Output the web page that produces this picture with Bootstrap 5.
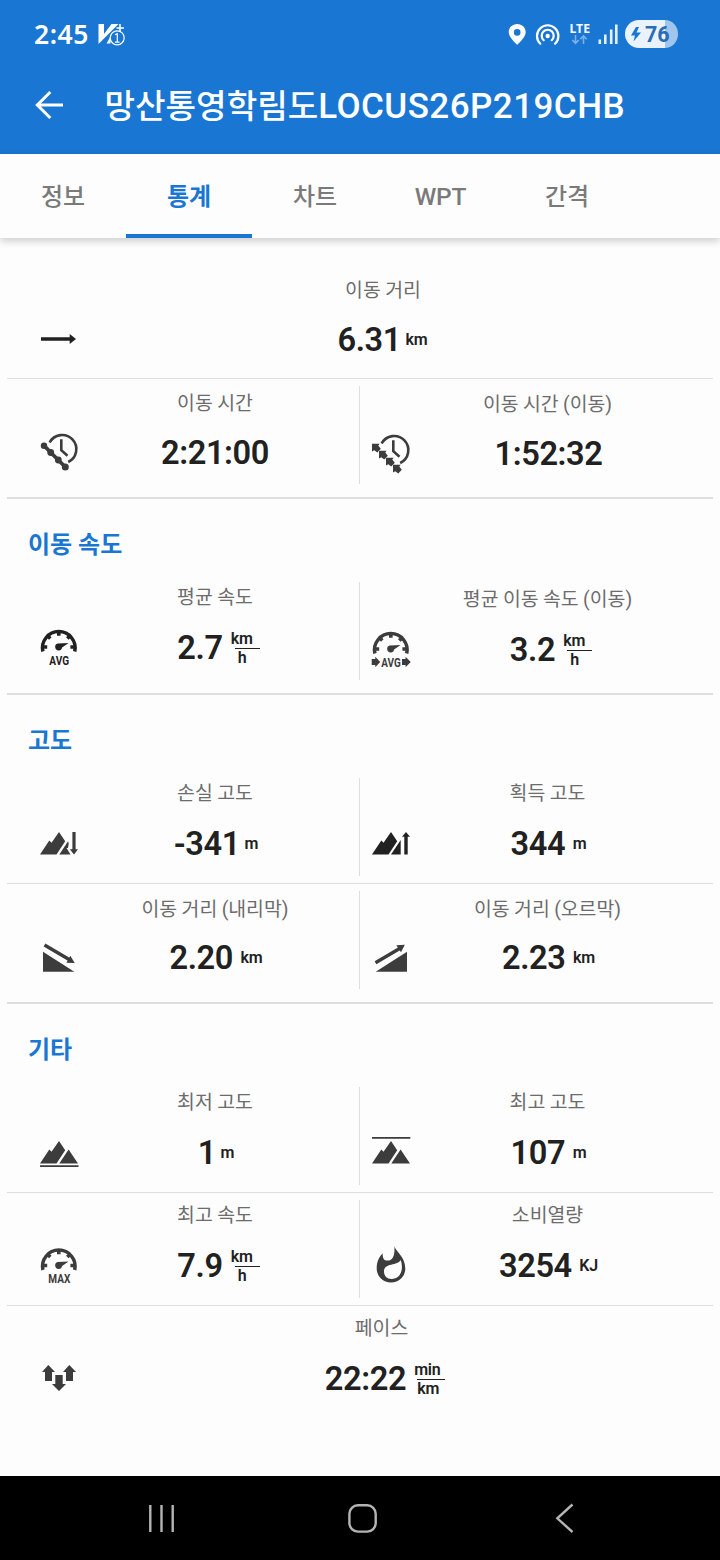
<!DOCTYPE html>
<html lang="ko">
<head>
<meta charset="utf-8">
<meta name="viewport" content="width=device-width, initial-scale=1">
<title>망산통영학림도LOCUS26P219CHB</title>
<link href="https://cdn.jsdelivr.net/npm/bootstrap@5.3.0/dist/css/bootstrap.min.css" rel="stylesheet">
<style>
  :root { --brand:#1976d2; --paper:#fdfdfd; --ink:#212121; --icon:#3c3c3c; --rule:#dedede; }
  body { width:720px; height:1560px; background:var(--paper); color:var(--ink); font-family:Roboto,"Noto Sans CJK KR",sans-serif; overflow:hidden; }
  svg { display:block; flex:none; overflow:visible; }
  .app-head { background:var(--brand); height:154px; color:#fff; }
  .statusbar { height:68px; font-family:"Noto Sans",sans-serif; font-weight:600; padding:0 42px 0 34px; }
  .clock { font-size:26.5px; line-height:68px; letter-spacing:.5px; }
  .titlebar { height:74px; padding-left:34px; }
  .track-title { font-size:33.2px; font-weight:500; line-height:74px; white-space:nowrap; padding:3px 0 0 40.500px; }
  .track-title .code { font-size:35px; letter-spacing:.45px; }
  .tabs { height:84px; background:var(--paper); box-shadow:0 3px 8px rgba(0,0,0,.2); position:relative; }
  .tabs .nav-link { width:126px; height:84px; padding:0; line-height:87px; font-size:24px; font-weight:500; color:#7a7a7a; border-bottom:4px solid transparent; border-radius:0; }
  .tabs .nav-link.active { color:var(--brand); border-bottom-color:var(--brand); font-weight:700; }
  .tabs .latin { font-size:24.5px; letter-spacing:-.2px; line-height:86px; padding-right:1px; }
  .stats { height:1238px; padding:28px 7px 0; }
  .group { border-bottom:2px solid var(--rule); padding-bottom:6px; }
  .group:last-child { border:0; }
  .group-title { height:76px; margin:0; padding:8px 0 0 21px; line-height:76px; font-size:24px; font-weight:700; color:var(--brand); }
  .stat-row { padding:7px 21px; height:112px; }
  .stat-row + .stat-row { border-top:1px solid var(--rule); height:113px; }
  .cell { width:331px; height:98px; }
  .cell.whole { width:664px; }
  .cell + .cell { width:333px; border-left:1px solid var(--rule); }
  .low1 { padding-top:1px; } .low2 { padding-top:2px; }
  .glyph { width:40px; height:40px; margin:46px -9px 0 11px; fill:var(--icon); color:var(--icon); }
  .glyph.dark { fill:var(--ink); color:var(--ink); }
  .glyph text { font:700 12px Roboto,sans-serif; }
  .caption-ko { font-size:19.4px; line-height:30px; padding:2px 0 0 1px; height:30px; font-weight:400; color:#6c6c6c; white-space:nowrap; word-spacing:-.4px; }
  .group:first-child .caption-ko, .low1 .caption-ko { padding-top:2.500px; }
  .group:not(:first-child) .cell:not(.low1) .caption-ko { padding-top:1.400px; }
  .value { height:40px; margin-top:16px; padding-left:3px; font-size:32.600px; font-weight:600; line-height:40px; letter-spacing:-.4px; }
  .value.plain { padding-left:1px; }
  .value.of { padding-left:8px; }
  .group:first-child .value { margin-top:16.500px; }
  .unit { font-size:16px; font-weight:600; margin-left:7.500px; letter-spacing:-.2px; }
  .unit.near { margin-left:4.500px; }
  .frac { font-size:16px; line-height:18px; font-weight:600; margin-left:8px; margin-top:-1px; text-align:left; letter-spacing:-.2px; }
  .frac .under { display:block; margin-left:4px; border-top:1px solid currentColor; width:25px; padding-left:3px; line-height:17px; }
  .frac.wide .under { width:28px; padding-left:0; margin-left:3px; }
  .navbar-sys { height:84px; background:#000; }
</style>
</head>
<body>
<header class="app-head">
  <div class="statusbar d-flex align-items-center">
    <span class="clock">2:45</span>
    <svg width="30" height="26" viewBox="89.500 21 30 26" fill="none" stroke="#fff">
      <path d="M99 24h5.500v10l7.500-10h7l-20 20z" fill="#fff" stroke="none"/>
      <path d="M107 43.500l4-7v7z" fill="#fff" stroke="none"/>
      <path d="M120.500 24v8M117 28h7.500" stroke-width="1.500"/>
      <circle cx="117.700" cy="37.800" r="7" fill="#1976d2" stroke-width="1.200"/>
      <path d="M115.500 34.700l2.300-1v8.500M115.500 42.200h4.500" stroke-width="1.200"/>
    </svg>
    <svg class="ms-auto" width="172" height="32" viewBox="506 17 172 32" fill="none" stroke="#fff">
      <path fill="#fff" stroke="none" fill-rule="evenodd" d="M517.200 23c-4.800 0-8.500 3.600-8.500 8.200 0 5.300 8.500 12.500 8.500 12.500s8.500-7.200 8.500-12.500c0-4.600-3.700-8.200-8.500-8.200zm0 5.100a3.300 3.300 0 1 1 0 6.600 3.300 3.300 0 0 1 0-6.600z"/>
      <g stroke-width="2.200" stroke-linecap="round">
        <path d="M540.300 42.700a10.700 10.700 0 1 1 14.800 0M543.700 39.200a6 6 0 1 1 8 0"/>
        <circle cx="547.700" cy="35" r="2.200" fill="#fff" stroke="none"/>
      </g>
      <text x="569.500" y="31.800" fill="#fff" stroke="none" font-size="13" font-weight="700" textLength="20.500" lengthAdjust="spacingAndGlyphs">LTE</text>
      <path stroke="#7db1e6" stroke-width="1.600" d="M575.500 34v8M572.300 39l3.200 3.400 3.200-3.400M583.500 43v-8M580.300 38.200l3.200-3.400 3.200 3.400"/>
      <path stroke-width="2.600" d="M599.800 38.500v4.500M605.300 33.500v9.500M611.200 28.500v14.500M616.300 23.500v19.500" stroke="#e4effa"/>
      <path fill="#eaf3fc" stroke="none" d="M665 19h-26a14 14 0 0 0 0 28h26z"/>
      <path fill="#a0c6ee" stroke="none" d="M665 19a13 14 0 0 1 0 28z"/>
      <path fill="#1976d2" stroke="none" d="M636 26l-5 8.500h4l-1.500 6 7.500-9h-4.500l2.500-5.500z"/>
      <text x="645" y="40.800" fill="#2a6cb5" stroke="none" font-family="Roboto" font-size="21.500" font-weight="700" textLength="24.500">76</text>
    </svg>
  </div>
  <div class="titlebar d-flex align-items-center">
    <svg width="30" height="30" viewBox="34 90 30 30" fill="none" stroke="#fff" stroke-width="3"><path d="M63 105H38M50.300 92L37.300 105l13 13"/></svg>
    <h1 class="track-title m-0">망산통영학림도<span class="code">LOCUS26P219CHB</span></h1>
  </div>
</header>
<nav class="tabs nav text-center">
  <a class="nav-link">정보</a><a class="nav-link active">통계</a><a class="nav-link">차트</a><a class="nav-link latin">WPT</a><a class="nav-link">간격</a>
</nav>

<svg width="0" height="0" class="position-absolute">
  <defs>
    <g id="dial">
      <path d="M3.900 23.500A16.300 16.300 0 1 1 35.700 23.500" fill="none" stroke="currentColor" stroke-width="3.500"/>
      <path d="M19.800 4v3.700M8.700 7.900l2.600 2.600M30.900 7.900l-2.600 2.600M4 19h4.200M35.600 19h-4.200" fill="none" stroke="currentColor" stroke-width="3.600"/>
      <path d="M29.600 14.900l-10.800.7a3.500 3.500 0 1 0 4.300 4z"/>
    </g>
    <g id="watch" fill="none" stroke="currentColor" stroke-width="2.600">
      <path d="M10.600 10.500A14.200 14.200 0 1 1 29.200 30"/>
      <path d="M22.300 7.300v10.900l6.200 5.600"/>
    </g>
    <path id="nw" d="M-4.300-4.300H3.300L2-2.500 4.500.8 1 4.500-2 2.300-4.300 3.600z"/>
    <path id="peak" d="M1 30.500L10.300 16.500l2.200 2.200L20 8l6.200 9.300L17.500 30.500z"/>
  </defs>
</svg>

<main class="stats">
  <section class="group">
    <div class="stat-row d-flex">
      <div class="cell whole d-flex">
        <svg class="glyph dark" viewBox="0 0 40 40"><path d="M2 18.300h28.700V15l6.300 5-6.300 5v-3.300H2z"/></svg>
        <div class="flex-fill text-center"><div class="caption-ko ps-1">이동 거리</div><div class="value d-flex justify-content-center">6.31<span class="unit near">km</span></div></div>
      </div>
    </div>
    <div class="stat-row d-flex">
      <div class="cell d-flex">
        <svg class="glyph" viewBox="0 0 40 40"><use href="#watch"/><path d="M5 13.500L11.700 20.500l7.600 7.500 7 7" fill="none" stroke="currentColor" stroke-width="3.800"/><circle cx="5" cy="13.700" r="3.200"/><circle cx="11.700" cy="20.500" r="3.400"/><circle cx="19.300" cy="28" r="3.400"/><circle cx="26.300" cy="35" r="3.500"/></svg>
        <div class="flex-fill text-center"><div class="caption-ko">이동 시간</div><div class="value plain">2:21:00</div></div>
      </div>
      <div class="cell low1 d-flex">
        <svg class="glyph" viewBox="0 0 40 40"><use href="#watch"/><use href="#nw" x="5.300" y="15"/><use href="#nw" x="12.300" y="22"/><use href="#nw" x="19.300" y="29"/><use href="#nw" x="26.300" y="36"/></svg>
        <div class="flex-fill text-center"><div class="caption-ko">이동 시간 (이동)</div><div class="value">1:52:32</div></div>
      </div>
    </div>
  </section>

  <section class="group">
    <h2 class="group-title">이동 속도</h2>
    <div class="stat-row d-flex">
      <div class="cell d-flex">
        <svg class="glyph dark" viewBox="0 0 40 40"><use href="#dial"/><text x="10.300" y="36.500" textLength="19.700" lengthAdjust="spacingAndGlyphs">AVG</text></svg>
        <div class="flex-fill text-center"><div class="caption-ko">평균 속도</div><div class="value of d-flex justify-content-center align-items-center">2.7<span class="frac">km<span class="under">h</span></span></div></div>
      </div>
      <div class="cell low2 d-flex">
        <svg class="glyph" viewBox="0 0 40 40"><use href="#dial"/><text x="10.300" y="36.500" textLength="19.500" lengthAdjust="spacingAndGlyphs">AVG</text><path d="M.7 29h3.600v-2.300L9.200 32l-4.900 5.300V35H.7zM31 29h3.600v-2.300l5.100 5.300-5.100 5.300V35H31z"/></svg>
        <div class="flex-fill text-center"><div class="caption-ko">평균 이동 속도 (이동)</div><div class="value of d-flex justify-content-center align-items-center">3.2<span class="frac">km<span class="under">h</span></span></div></div>
      </div>
    </div>
  </section>

  <section class="group">
    <h2 class="group-title">고도</h2>
    <div class="stat-row d-flex">
      <div class="cell d-flex">
        <svg class="glyph" viewBox="0 0 40 40"><use href="#peak"/><path d="M20.300 30.500l8.800-13.300.6 2.300-.7 4.500h-1.500l4 6.500zM33.400 8h3.200v17.300H39l-4 5.200-4.200-5.200h2.600z"/></svg>
        <div class="flex-fill text-center"><div class="caption-ko">손실 고도</div><div class="value d-flex justify-content-center">-341<span class="unit near">m</span></div></div>
      </div>
      <div class="cell d-flex">
        <svg class="glyph dark" viewBox="0 0 40 40"><use href="#peak"/><path d="M20 30.500L29.700 16v14.500zM33.300 30.500V12.800H31L35 8l4 4.800h-2.300v17.700z"/></svg>
        <div class="flex-fill text-center"><div class="caption-ko">획득 고도</div><div class="value d-flex justify-content-center">344<span class="unit">m</span></div></div>
      </div>
    </div>
    <div class="stat-row d-flex">
      <div class="cell low1 d-flex">
        <svg class="glyph" viewBox="0 1 40 40"><path d="M4 14.700v20h31.300z"/><path d="M5.500 8l25.500 15" fill="none" stroke="currentColor" stroke-width="3.400"/><path d="M31.300 18.700l4.400 7.300-8.300-.3z"/></svg>
        <div class="flex-fill text-center"><div class="caption-ko">이동 거리 (내리막)</div><div class="value d-flex justify-content-center">2.20<span class="unit">km</span></div></div>
      </div>
      <div class="cell low1 d-flex">
        <svg class="glyph" viewBox="0 1 40 40"><path d="M4.700 34.700L36 14.700v20z"/><path d="M4.500 25.700l25-14.700" fill="none" stroke="currentColor" stroke-width="3.400"/><path d="M25.300 8.300l8.500-.6L30 15.200z"/></svg>
        <div class="flex-fill text-center"><div class="caption-ko">이동 거리 (오르막)</div><div class="value d-flex justify-content-center">2.23<span class="unit">km</span></div></div>
      </div>
    </div>
  </section>

  <section class="group">
    <h2 class="group-title">기타</h2>
    <div class="stat-row d-flex">
      <div class="cell d-flex">
        <svg class="glyph" viewBox="0 0 40 40"><use href="#peak"/><path d="M20.300 30.500l9.300-14L39 30.500zM1 32.200h38.500V34H1z"/></svg>
        <div class="flex-fill text-center"><div class="caption-ko">최저 고도</div><div class="value d-flex justify-content-center">1<span class="unit near">m</span></div></div>
      </div>
      <div class="cell d-flex">
        <svg class="glyph" viewBox="0 0 40 40"><use href="#peak"/><path d="M20.300 30.500l9.300-14L39 30.500zM1 4h38.300v1.800H1z"/></svg>
        <div class="flex-fill text-center"><div class="caption-ko">최고 고도</div><div class="value d-flex justify-content-center">107<span class="unit">m</span></div></div>
      </div>
    </div>
    <div class="stat-row d-flex">
      <div class="cell d-flex">
        <svg class="glyph" viewBox="0 0 40 40"><use href="#dial" y=".5"/><text x="9.300" y="36.700" textLength="22" lengthAdjust="spacingAndGlyphs">MAX</text></svg>
        <div class="flex-fill text-center"><div class="caption-ko">최고 속도</div><div class="value of d-flex justify-content-center align-items-center">7.9<span class="frac">km<span class="under">h</span></span></div></div>
      </div>
      <div class="cell d-flex">
        <svg class="glyph" viewBox="0 0 40 40"><path fill-rule="evenodd" d="M23.300-.3C23.800 5 34.300 10 34.300 22.500A14.300 14 0 0 1 5.700 22.500C5.700 16 8 11 11.700 7.300c-.3 4 1 7.300 4.700 7.300C23 14.600 24 7 23.300-.3zM29.700 14C27 20 13 16.500 13 25.500c0 4.500 3 7.500 7.500 7.500 9 0 12.500-9.500 9.200-19z"/></svg>
        <div class="flex-fill text-center"><div class="caption-ko">소비열량</div><div class="value d-flex justify-content-center">3254<span class="unit">KJ</span></div></div>
      </div>
    </div>
    <div class="stat-row d-flex">
      <div class="cell whole d-flex">
        <svg class="glyph" viewBox="0 0 40 40"><path d="M9.300 6L16 13h-3v9H6v-9H3zM30.300 6L37 13h-3v9h-7v-9h-3zM16.300 16h7.400v9H27l-7 7-7-7h3.300z"/></svg>
        <div class="flex-fill text-center"><div class="caption-ko">페이스</div><div class="value of d-flex justify-content-center align-items-center">22:22<span class="frac wide">min<span class="under">km</span></span></div></div>
      </div>
    </div>
  </section>
</main>

<footer class="navbar-sys">
  <svg width="720" height="84" viewBox="0 1476 720 84" fill="none" stroke="#b4b4b4" stroke-width="2.400">
    <path d="M150.300 1505v27M161.500 1505v27M172.700 1505v27"/>
    <rect x="349.400" y="1505.300" width="26.300" height="26.300" rx="8.500"/>
    <path d="M572.500 1504.500l-15.200 13.800 15.200 13.700"/>
  </svg>
</footer>
<script src="https://cdn.jsdelivr.net/npm/bootstrap@5.3.0/dist/js/bootstrap.bundle.min.js"></script>
</body>
</html>
